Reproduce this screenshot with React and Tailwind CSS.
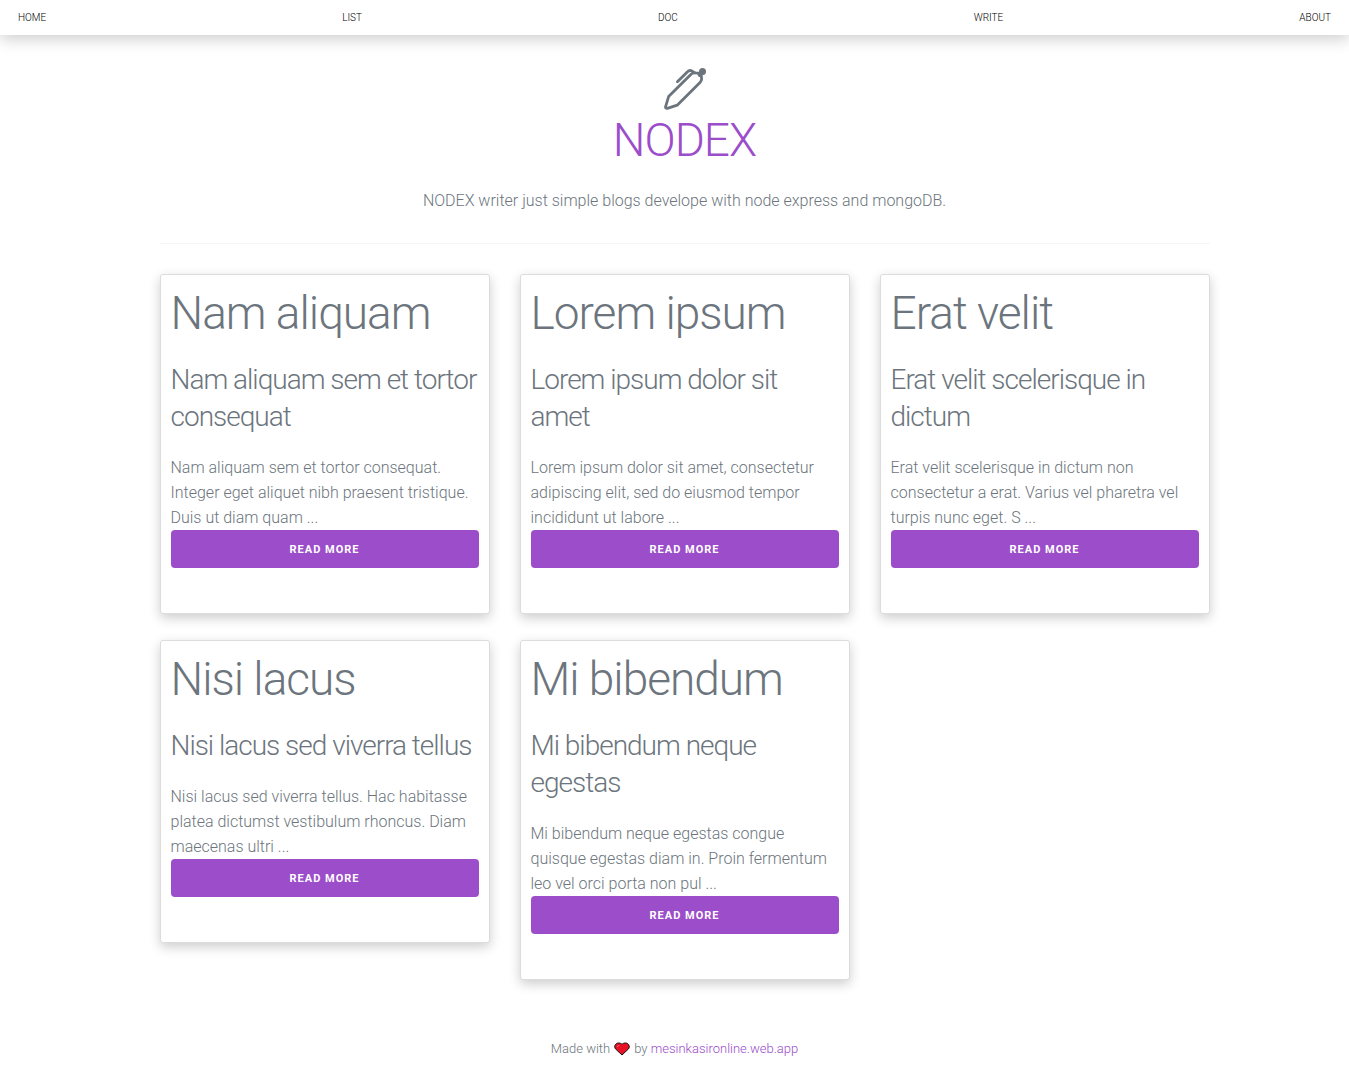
const navItems = ["HOME", "LIST", "DOC", "WRITE", "ABOUT"];

const posts = [
  {
    title: "Nam aliquam",
    subtitle: "Nam aliquam sem et tortor consequat",
    excerpt:
      "Nam aliquam sem et tortor consequat. Integer eget aliquet nibh praesent tristique. Duis ut diam quam ...",
  },
  {
    title: "Lorem ipsum",
    subtitle: "Lorem ipsum dolor sit amet",
    excerpt:
      "Lorem ipsum dolor sit amet, consectetur adipiscing elit, sed do eiusmod tempor incididunt ut labore ...",
  },
  {
    title: "Erat velit",
    subtitle: "Erat velit scelerisque in dictum",
    excerpt:
      "Erat velit scelerisque in dictum non consectetur a erat. Varius vel pharetra vel turpis nunc eget. S ...",
  },
  {
    title: "Nisi lacus",
    subtitle: "Nisi lacus sed viverra tellus",
    excerpt:
      "Nisi lacus sed viverra tellus. Hac habitasse platea dictumst vestibulum rhoncus. Diam maecenas ultri ...",
  },
  {
    title: "Mi bibendum",
    subtitle: "Mi bibendum neque egestas",
    excerpt:
      "Mi bibendum neque egestas congue quisque egestas diam in. Proin fermentum leo vel orci porta non pul ...",
  },
];

function PenIcon() {
  return (
    <svg
      className="size-[42px]"
      viewBox="0 0 42 42"
      fill="none"
      stroke="#6c757d"
      strokeWidth="2.8"
      strokeLinecap="round"
      strokeLinejoin="round"
      aria-hidden="true"
    >
      <path d="M1.6 38.6 4.6 28.6 26.8 6.4Q28.6 4.6 31 4.9L34.6 5.2 37.4 8.4 37.6 11Q37.6 12.8 36 14.4L13.2 37.2 3.4 40.4Q1.2 40.6 1.6 38.6Z" />
      <path d="M13.4 13.8 23 4.2Q25.4 1.8 27.4 2.8L31 4.9" />
      <circle cx="38.5" cy="3.5" r="3.5" fill="#6c757d" stroke="none" />
      <path d="M36 6.4 37.4 5" strokeWidth="5" />
    </svg>
  );
}

function Heart() {
  return (
    <svg className="mx-1 inline-block h-[14px] w-4 align-[-3px]" viewBox="0 0 16 14" role="img" aria-label="love">
      <path
        d="M8 13 1.4 6.8C-.2 4.6 1.4 1 4.4 1 6.2 1 7.4 1.6 8 2.4 8.6 1.6 9.8 1 11.6 1c3 0 4.6 3.6 3 5.8Z"
        fill="#e81224"
        stroke="#111"
        strokeWidth="1"
      />
      <path d="M3.4 4.6Q3.8 3.4 5 3.4" fill="none" stroke="#f4707a" strokeWidth="1" strokeLinecap="round" />
    </svg>
  );
}

function PostCard({ post }) {
  return (
    <article className="rounded-[3px] border border-[#dcdcdc] bg-white px-2.5 pt-[11px] pb-[45px] shadow-[0_4px_12px_0_rgba(0,0,0,0.2)]">
      <h2 className="mb-5 text-[46px] leading-[55px] tracking-[-1px]">{post.title}</h2>
      <h3 className="mb-5 text-[28px] leading-[37px] tracking-[-1px]">{post.subtitle}</h3>
      <p className="leading-[25px]">{post.excerpt}</p>
      <button
        type="button"
        className="block w-full cursor-pointer rounded bg-[#9b4dca] pt-0.5 text-center text-[11px] leading-9 font-bold tracking-[1px] text-white uppercase"
      >
        Read more
      </button>
    </article>
  );
}

export default function App() {
  return (
    <div className="bg-white font-['Roboto','Open_Sans',sans-serif] text-base font-light text-[#6c757d]">
      <nav className="flex h-[35px] items-center justify-between px-[18px] text-[10px] text-black shadow-[0_4px_16px_0_rgba(0,0,0,0.2)]">
        {navItems.map((item) => (
          <a key={item} href="#">
            {item}
          </a>
        ))}
      </nav>
      <main className="pl-5">
        <div className="mx-auto max-w-[1050px]">
          <header className="flex flex-col items-center pt-[33px] text-center">
            <PenIcon />
            <h1 className="mt-[3px] mb-5 text-[46px] leading-[55px] tracking-[-1px] text-[#9b4dca]">NODEX</h1>
            <p className="leading-[25px]">
              NODEX writer just simple blogs develope with node express and mongoDB.
            </p>
          </header>
          <hr className="my-[30px] border-[#f4f5f6]" />
          <section className="grid grid-cols-3 items-start gap-x-[30px] gap-y-[26px]">
            {posts.map((post) => (
              <PostCard key={post.title} post={post} />
            ))}
          </section>
        </div>
      </main>
      <footer className="pt-14 pb-6 text-center text-[13px] leading-[26px]">
        Made with
        <Heart />
        by{" "}
        <a href="#" className="text-[#9b4dca]">
          mesinkasironline.web.app
        </a>
      </footer>
    </div>
  );
}
